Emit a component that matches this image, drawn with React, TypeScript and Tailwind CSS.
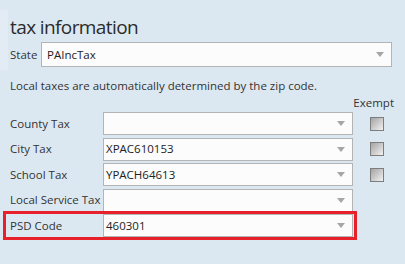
import React from 'react';

const font = { fontFamily: '"Open Sans", "Noto Sans", Arial, sans-serif' };

const Arrow = () => (
  <svg width="8" height="5" viewBox="0 0 8 5" className="shrink-0">
    <path d="M0 0 H8 L4 5 Z" fill="#a6a6a6" />
  </svg>
);

const Select = ({ value, className = '' }: { value?: string; className?: string }) => (
  <div
    className={`flex items-center justify-between border border-[#b4b4b4] bg-[#fcfcfc] pr-[7px] text-[11.5px] text-[#222] ${className}`}
  >
    <span>{value}</span>
    <Arrow />
  </div>
);

const Checkbox = () => (
  <div className="h-[14px] w-[14px] border-[1.5px] border-[#7d7d7d] bg-gradient-to-br from-[#a4a4a4] to-[#f2f2f2]" />
);

const rows = [
  { label: 'County Tax', value: '', exempt: true },
  { label: 'City Tax', value: 'XPAC610153', exempt: true },
  { label: 'School Tax', value: 'YPACH64613', exempt: true },
  { label: 'Local Service Tax', value: '', exempt: false },
];

export default function App() {
  return (
    <div className="relative h-[264px] w-[405px] overflow-hidden bg-[#dce8f1] text-[#333]" style={font}>
      <div className="absolute left-0 top-[10px] h-[60px] w-[8px] bg-[#e3ecf4]" />
      <div className="relative pl-[10px] pt-[15px]">
        <h1 className="text-[19px] leading-[24px] tracking-[-0.6px] text-[#2b2b2b]">tax information</h1>

        <div className="mt-[3px] flex items-center">
          <span className="w-[31px] text-[11.5px]">State</span>
          <Select value="PAIncTax" className="h-[25px] w-[351px] pl-[5px]" />
        </div>

        <p className="mt-[11px] whitespace-nowrap text-[11.5px] leading-[16px]">
          Local taxes are automatically determined by the zip code.
        </p>

        <div className="mt-[1px] flex justify-end pr-[11px] text-[11.5px] leading-[16px]">Exempt</div>

        <div className="mt-[1px] flex flex-col">
          {rows.map((r) => (
            <div key={r.label} className="flex h-[25.5px] items-start">
              <div className="flex h-[23px] w-[93px] items-center whitespace-nowrap text-[11.5px]">{r.label}</div>
              <Select value={r.value} className="h-[23px] w-[250px] pl-[2px]" />
              <div className="ml-[17px] flex h-[23px] items-center">{r.exempt && <Checkbox />}</div>
            </div>
          ))}
          <div className="ml-[-7px] mt-[-3px] flex w-[354px] border-[3px] border-[#e8202a] pl-[4px] pr-[1px]">
            <div className="flex h-[23px] w-[93px] items-center text-[11.5px]">PSD Code</div>
            <Select value="460301" className="h-[23px] w-[250px] pl-[2px]" />
          </div>
        </div>
      </div>
    </div>
  );
}
